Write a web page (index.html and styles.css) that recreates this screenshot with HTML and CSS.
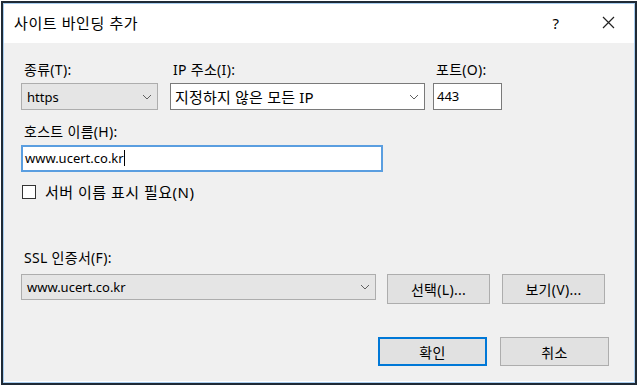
FILE: index.html
```html
<!DOCTYPE html>
<html lang="ko">
  <head>
    <meta charset="UTF-8" />
    <title>사이트 바인딩 추가</title>
    <link rel="stylesheet" href="styles.css">
  </head>
  <body>
    <div class="window">
      <div class="titleBar">
        <span class="title">사이트 바인딩 추가</span>
        <span class="help">?</span>
        <svg class="close" width="13" height="13" viewBox="0 0 13 13"><path d="M1 1L12 12M12 1L1 12" stroke="#222" stroke-width="1.2" fill="none"/></svg>
      </div>
      <div class="content">
        <!--종류 / IP / 포트-->
        <div class="row">
          <div class="field typeField">
            <label>종류(T):</label>
            <div class="combo grayCombo">
              <span>https</span>
              <svg width="10" height="6" viewBox="0 0 10 6"><polyline points="1,1 5,5 9,1" stroke="#606060" fill="none"/></svg>
            </div>
          </div>
          <div class="field ipField">
            <label>IP 주소(I):</label>
            <div class="combo whiteCombo">
              <span class="ipText">지정하지 않은 모든 IP</span>
              <svg width="10" height="6" viewBox="0 0 10 6"><polyline points="1,1 5,5 9,1" stroke="#606060" fill="none"/></svg>
            </div>
          </div>
          <div class="field portField">
            <label>포트(O):</label>
            <div class="textBox">443</div>
          </div>
        </div>

        <!--호스트 이름-->
        <div class="field hostField">
          <label>호스트 이름(H):</label>
          <div class="textBox focused">www.ucert.co.kr<span class="caret"></span></div>
        </div>

        <div class="checkRow">
          <span class="checkBox"></span>
          <span>서버 이름 표시 필요(N)</span>
        </div>

        <!--SSL 인증서-->
        <div class="field sslField">
          <label>SSL 인증서(F):</label>
          <div class="sslRow">
            <div class="combo grayCombo sslCombo">
              <span>www.ucert.co.kr</span>
              <svg width="10" height="6" viewBox="0 0 10 6"><polyline points="1,1 5,5 9,1" stroke="#606060" fill="none"/></svg>
            </div>
            <button class="btn selectBtn">선택(L)...</button>
            <button class="btn viewBtn">보기(V)...</button>
          </div>
        </div>

        <div class="footer">
          <button class="btn okBtn">확인</button>
          <button class="btn cancelBtn">취소</button>
        </div>
      </div>
    </div>
  </body>
</html>
```

FILE: styles.css
```css
* {
  margin: 0;
  padding: 0;
  box-sizing: border-box;
}
body {
  background: #fff;
  font-family: "Noto Sans", "Noto Sans CJK KR", sans-serif;
  font-size: 13px;
  color: #000;
}
/*창 테두리*/
.window {
  margin: 1px 0 0 1px;
  width: 636px;
  height: 384px;
  border: 2px solid #1f2a36;
  box-shadow: inset 0 0 0 1px #a9cdef;
  display: flex;
  flex-direction: column;
}
.titleBar {
  height: 39px;
  margin: 1px 1px 0 1px;
  background: #fff;
  display: flex;
  align-items: center;
  padding: 0 0 2px 10px;
}
.title {
  font-size: 15px;
  letter-spacing: 0.6px;
  flex: 1;
}
.help {
  font-size: 15px;
  margin-right: 43px;
}
.close {
  margin-right: 19px;
}
/*본문*/
.content {
  flex: 1;
  margin: 0 1px 2px 1px;
  background: #f0f0f0;
  padding: 18px 0 0 17px;
  display: flex;
  flex-direction: column;
}
label {
  display: block;
  height: 18px;
  line-height: 18px;
  margin-bottom: 4px;
  padding-left: 3px;
  font-size: 14px;
  letter-spacing: 0.3px;
}
.row {
  display: flex;
}
.typeField {
  width: 137px;
  margin-right: 12px;
}
.ipField {
  width: 255px;
  margin-right: 8px;
}
.portField {
  width: 69px;
}
.combo {
  height: 27px;
  display: flex;
  align-items: center;
  justify-content: space-between;
  padding: 0 5px 0 5px;
}
.grayCombo {
  background: #e5e5e5;
  border: 1px solid #adadad;
}
.whiteCombo {
  background: #fff;
  border: 1px solid #7a7a7a;
  padding-left: 4px;
}
.ipText {
  font-size: 15px;
  letter-spacing: 0.2px;
}
.textBox {
  height: 27px;
  background: #fff;
  border: 1px solid #7a7a7a;
  line-height: 25px;
  padding-left: 3px;
}
.hostField {
  margin-top: 13px;
  width: 362px;
}
.focused {
  border: 2px solid #5a9ee0;
  line-height: 23px;
  padding-left: 2px;
}
.caret {
  display: inline-block;
  width: 1px;
  height: 16px;
  background: #000;
  vertical-align: -3px;
}
.checkRow {
  margin-top: 12px;
  display: flex;
  align-items: center;
  height: 15px;
  font-size: 15px;
  letter-spacing: 0.5px;
}
.checkBox {
  width: 14px;
  height: 14px;
  border: 1px solid #333;
  background: #fff;
  margin: 0 9px 0 1px;
}
.sslField {
  margin-top: 50px;
}
.sslField label {
  margin-bottom: 7px;
}
.sslRow {
  display: flex;
  align-items: flex-start;
}
.sslCombo {
  width: 355px;
  height: 26px;
}
.btn {
  font: inherit;
  font-size: 14px;
  letter-spacing: 0.3px;
  background: #e1e1e1;
  border: 1px solid #adadad;
  color: #000;
}
.selectBtn {
  width: 103px;
  height: 30px;
  margin-left: 11px;
}
.viewBtn {
  width: 103px;
  height: 30px;
  margin-left: 12px;
}
.footer {
  margin-top: 33px;
  display: flex;
  padding-left: 357px;
}
.okBtn {
  width: 109px;
  height: 29px;
  border: 2px solid #0078d7;
}
.cancelBtn {
  width: 109px;
  height: 29px;
  margin-left: 13px;
}
```
